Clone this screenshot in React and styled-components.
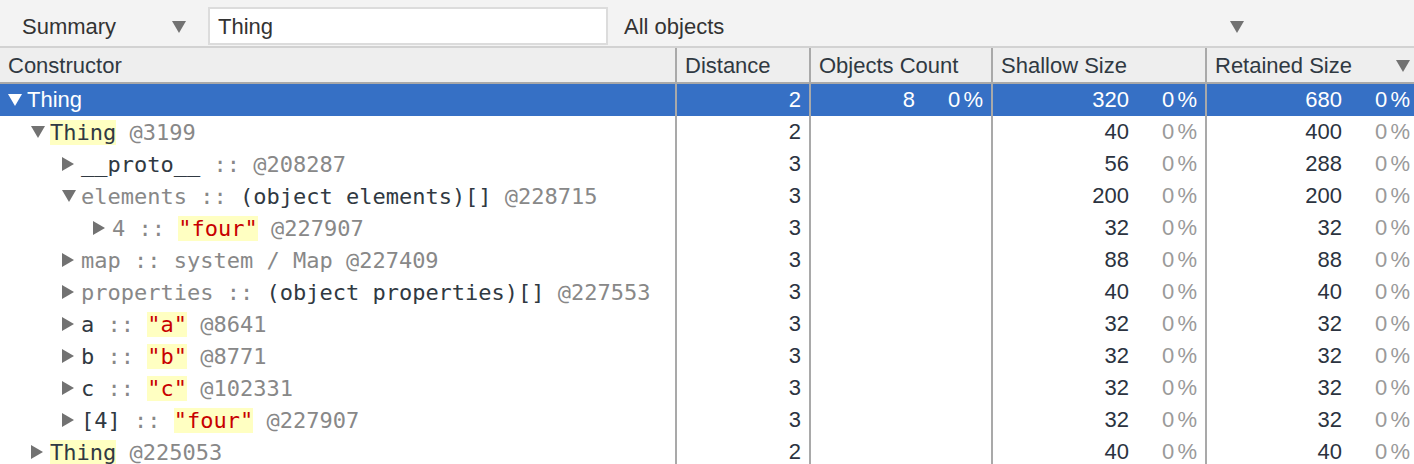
import React from "react";
import styled, { createGlobalStyle } from "styled-components";

const GlobalStyle = createGlobalStyle`
  html, body {
    margin: 0;
    padding: 0;
    background: #fff;
    overflow: hidden;
  }
  body {
    font-family: "Liberation Sans", Arial, sans-serif;
  }
`;

const Page = styled.div`
  width: 1414px;
  height: 464px;
  overflow: hidden;
  background: #fff;
`;

const Toolbar = styled.div`
  display: flex;
  align-items: flex-start;
  height: 48px;
  padding-top: 7px;
  box-sizing: border-box;
  background: #f3f3f3;
  border-bottom: 2px solid #d2d2d2;
  font-size: 22px;
  color: #333;
`;

const Select = styled.div`
  display: flex;
  align-items: center;
  height: 40px;
  width: ${(p) => p.width}px;
  padding-left: ${(p) => p.pad}px;
  box-sizing: border-box;
  justify-content: space-between;
`;

const FilterInput = styled.div`
  width: 400px;
  height: 38px;
  box-sizing: border-box;
  border: 2px solid #dcdcdc;
  background: #fff;
  padding: 2px 0 0 8px;
  display: flex;
  align-items: center;
  margin-right: 16px;
  margin-left: 22px;
  color: #333;
`;

const Columns = `
  display: grid;
  grid-template-columns: 675px 134px 182px 214px 1fr;
`;

const HeaderRow = styled.div`
  ${Columns}
  height: 36px;
  box-sizing: border-box;
  background: #eeeeee;
  border-bottom: 2px solid #a9a9a9;
  font-size: 22px;
  color: #303942;
`;

const HeaderCell = styled.div`
  display: flex;
  align-items: center;
  justify-content: space-between;
  padding: 2px 4px 0 8px;
  box-sizing: border-box;
  border-left: ${(p) => (p.first ? "none" : "2px solid #a9a9a9")};
`;

const Row = styled.div`
  ${Columns}
  height: 32px;
  background: ${(p) => (p.selected ? "#3670c5" : "#fff")};
  color: ${(p) => (p.selected ? "#fff" : "#2b3340")};
  font-size: 22px;
`;

const TreeCell = styled.div`
  display: flex;
  align-items: center;
  white-space: pre;
  padding-left: ${(p) => (p.depth === 0 ? 8 : p.depth * 31)}px;
  font-family: ${(p) =>
    p.depth === 0 ? `"Liberation Sans", Arial, sans-serif` : `"DejaVu Sans Mono", monospace`};
  font-size: 22px;
  overflow: hidden;
`;

const Toggle = styled.span`
  display: inline-flex;
  align-items: center;
  width: 19px;
  flex: none;
`;

const NumCell = styled.div`
  display: flex;
  align-items: center;
  justify-content: flex-end;
  padding-right: ${(p) => p.pad ?? 8}px;
  border-left: 2px solid #a9a9a9;
  box-sizing: border-box;
`;

const Percent = styled.span`
  width: 68px;
  text-align: right;
  word-spacing: -3px;
  color: ${(p) => (p.selected ? "#fff" : "#9a9a9a")};
`;

const Hl = styled.span`
  background: #ffffc2;
`;

const Str = styled.span`
  color: #c80000;
`;

const Dim = styled.span`
  color: #888;
`;

const Dark = styled.span`
  color: #303942;
`;

const Arrow = ({ dir, color = "#727272" }) =>
  dir === "down" ? (
    <svg width="14" height="12" viewBox="0 0 14 12">
      <polygon points="0,0 14,0 7,12" fill={color} />
    </svg>
  ) : (
    <svg width="12" height="14" viewBox="0 0 12 14">
      <polygon points="0,0 12,7 0,14" fill={color} />
    </svg>
  );

const rows = [
  {
    depth: 1, open: true, dist: 2, shallow: 40, retained: 400,
    label: (<><Hl><Dark>Thing</Dark></Hl><Dim> @3199</Dim></>),
  },
  {
    depth: 2, dist: 3, shallow: 56, retained: 288,
    label: (<><Dark>__proto__</Dark><Dim> :: @208287</Dim></>),
  },
  {
    depth: 2, open: true, dist: 3, shallow: 200, retained: 200,
    label: (<><Dim>elements :: </Dim><Dark>(object elements)[]</Dark><Dim> @228715</Dim></>),
  },
  {
    depth: 3, dist: 3, shallow: 32, retained: 32,
    label: (<><Dim>4 :: </Dim><Hl><Str>"four"</Str></Hl><Dim> @227907</Dim></>),
  },
  {
    depth: 2, dist: 3, shallow: 88, retained: 88,
    label: (<Dim>map :: system / Map @227409</Dim>),
  },
  {
    depth: 2, dist: 3, shallow: 40, retained: 40,
    label: (<><Dim>properties :: </Dim><Dark>(object properties)[]</Dark><Dim> @227553</Dim></>),
  },
  {
    depth: 2, dist: 3, shallow: 32, retained: 32,
    label: (<><Dark>a</Dark><Dim> :: </Dim><Hl><Str>"a"</Str></Hl><Dim> @8641</Dim></>),
  },
  {
    depth: 2, dist: 3, shallow: 32, retained: 32,
    label: (<><Dark>b</Dark><Dim> :: </Dim><Hl><Str>"b"</Str></Hl><Dim> @8771</Dim></>),
  },
  {
    depth: 2, dist: 3, shallow: 32, retained: 32,
    label: (<><Dark>c</Dark><Dim> :: </Dim><Hl><Str>"c"</Str></Hl><Dim> @102331</Dim></>),
  },
  {
    depth: 2, dist: 3, shallow: 32, retained: 32,
    label: (<><Dark>[4]</Dark><Dim> :: </Dim><Hl><Str>"four"</Str></Hl><Dim> @227907</Dim></>),
  },
  {
    depth: 1, dist: 2, shallow: 40, retained: 40,
    label: (<><Hl><Dark>Thing</Dark></Hl><Dim> @225053</Dim></>),
  },
];

export default function App() {
  return (
    <Page>
      <GlobalStyle />
      <Toolbar>
        <Select width={186} pad={22}>
          <span>Summary</span>
          <Arrow dir="down" />
        </Select>
        <FilterInput>Thing</FilterInput>
        <Select width={620} pad={0}>
          <span>All objects</span>
          <Arrow dir="down" />
        </Select>
      </Toolbar>

      <HeaderRow>
        <HeaderCell first>Constructor</HeaderCell>
        <HeaderCell>Distance</HeaderCell>
        <HeaderCell>Objects Count</HeaderCell>
        <HeaderCell>Shallow Size</HeaderCell>
        <HeaderCell>
          <span>Retained Size</span>
          <Arrow dir="down" />
        </HeaderCell>
      </HeaderRow>

      <Row selected>
        <TreeCell depth={0}>
          <Toggle>
            <Arrow dir="down" color="#fff" />
          </Toggle>
          Thing
        </TreeCell>
        <NumCell>2</NumCell>
        <NumCell>
          8<Percent selected>0 %</Percent>
        </NumCell>
        <NumCell>
          320<Percent selected>0 %</Percent>
        </NumCell>
        <NumCell pad={4}>
          680<Percent selected>0 %</Percent>
        </NumCell>
      </Row>

      {rows.map((r, i) => (
        <Row key={i}>
          <TreeCell depth={r.depth}>
            <Toggle>
              <Arrow dir={r.open ? "down" : "right"} />
            </Toggle>
            {r.label}
          </TreeCell>
          <NumCell>{r.dist}</NumCell>
          <NumCell />
          <NumCell>
            {r.shallow}
            <Percent>0 %</Percent>
          </NumCell>
          <NumCell pad={4}>
            {r.retained}
            <Percent>0 %</Percent>
          </NumCell>
        </Row>
      ))}
    </Page>
  );
}
